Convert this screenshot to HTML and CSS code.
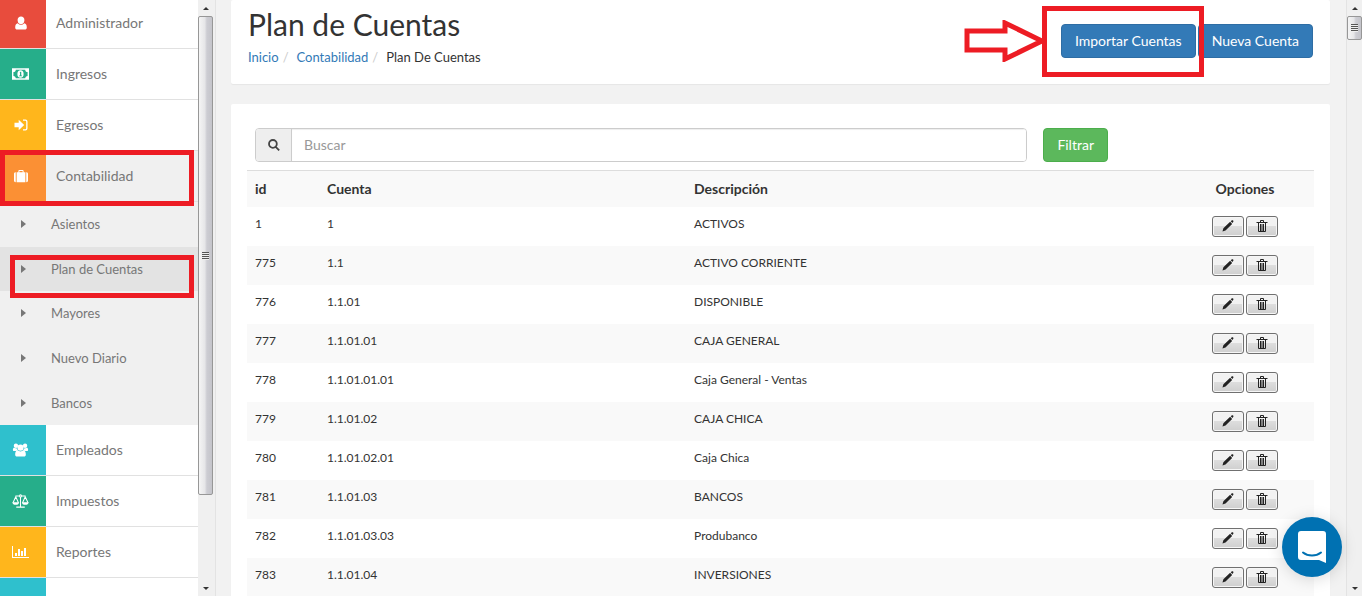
FILE: index.html
```html
<!DOCTYPE html>
<html lang="es">
<head>
    <meta charset="UTF-8">
    <meta name="viewport" content="width=device-width, initial-scale=1.0">
    <title>Plan de Cuentas</title>
    <link rel="stylesheet" href="styles.css">
</head>
<body>

    <!-- Iconos -->
    <svg class="iconos" aria-hidden="true">
        <symbol id="i-usuario" viewBox="0 0 14 14">
            <path d="M7 .5c2 0 3.400 1.500 3.400 3.500 0 1.600-.7 3-1.700 3.700L7 8.200l-1.700-.5C4.300 7 3.600 5.600 3.600 4 3.600 2 5 .5 7 .5z"/>
            <path d="M3.900 7.200c1.700 2 4.500 2 6.200 0 1.900.3 2.700 1.900 2.700 4.200 0 1.300-.8 2.100-2 2.100H3.200c-1.200 0-2-.8-2-2.100 0-2.300.8-3.900 2.700-4.200z"/>
        </symbol>
        <symbol id="i-dinero" viewBox="0 0 18 12">
            <path fill-rule="evenodd" d="M0 0h18v12H0zM4 1.500c0 1.400-1 2.500-2.500 2.500v4c1.500 0 2.500 1.100 2.500 2.500h10c0-1.400 1-2.500 2.500-2.500V4C15 4 14 2.900 14 1.500z"/>
            <ellipse cx="9" cy="6" rx="3.300" ry="4"/>
            <path class="hueco" d="M8 4.300 9 3.500h.8v4h.8v1H7.500v-1h1V4.800z"/>
        </symbol>
        <symbol id="i-entrar" viewBox="0 0 14 14">
            <path d="M.5 4.800h4.200V1.800l5.500 5.200-5.500 5.200v-3H.5z"/>
            <path d="M9 1.500h2.500a2 2 0 0 1 2 2v7a2 2 0 0 1-2 2H9v-1.300h2.300c.6 0 .9-.3.900-.9V3.700c0-.6-.3-.9-.9-.9H9z"/>
        </symbol>
        <symbol id="i-maletin" viewBox="0 0 16 14">
            <path d="M0 4.500C0 3.300.7 2.700 2 2.700V14C.7 14 0 13.300 0 12.200zM16 4.500c0-1.200-.7-1.800-2-1.800V14c1.300 0 2-.7 2-1.800z"/>
            <path fill-rule="evenodd" d="M3 2.700h2V1.200C5 .5 5.500 0 6.200 0h3.600C10.500 0 11 .5 11 1.200v1.500h2V14H3zM6.200 1.300v1.400h3.600V1.300z"/>
        </symbol>
        <symbol id="i-grupo" viewBox="0 0 18 16">
            <circle cx="3.800" cy="3.200" r="2.500"/>
            <circle cx="14.200" cy="3.200" r="2.500"/>
            <circle cx="9" cy="5.300" r="3.500"/>
            <path d="M1.200 5.300 4.800 6.200 6 8.500 4 9.200H1.500C.5 9.200.2 8.500.3 7.500c.1-1 .4-1.800.9-2.200zM16.800 5.300l-3.600.9L12 8.500l2 .7h2.500c1 0 1.300-.7 1.200-1.700-.1-1-.4-1.800-.9-2.200z"/>
            <path d="M5.700 8.300c1.900 1.700 4.700 1.700 6.600 0 1.800.2 2.800 2.200 2.800 4.700 0 1.500-.8 2.400-2.100 2.400H5c-1.300 0-2.100-.9-2.100-2.400 0-2.500 1-4.500 2.800-4.700z"/>
        </symbol>
        <symbol id="i-balanza" viewBox="0 0 20 16">
            <g fill="none" stroke="currentColor" stroke-width="1.200">
                <path d="M4 2h4.500M11.500 2H16M10 3v12M5 15.200h10M1.200 10 4.400 3l3.200 7M12.400 10l3.200-7 3.200 7"/>
                <circle cx="10" cy="2" r="1.200"/>
            </g>
            <path d="M.4 9.500h8c0 1.900-1.700 3-4 3s-4-1.100-4-3zM11.600 9.500h8c0 1.900-1.700 3-4 3s-4-1.100-4-3z"/>
        </symbol>
        <symbol id="i-barras" viewBox="0 0 17 14">
            <path d="M0 1h1v11h16v1H0zM3 8h2v3H3zM6 4h2v7H6zM9 6h2v5H9zM12 3h2v8h-2z"/>
        </symbol>
        <symbol id="i-flecha" viewBox="0 0 5 8">
            <path d="M0 0l5 4-5 4z"/>
        </symbol>
        <symbol id="i-lupa" viewBox="0 0 12 12">
            <path fill="none" stroke="currentColor" stroke-width="1.800" d="M8.800 4.900a3.900 3.900 0 1 1-7.800 0 3.900 3.900 0 0 1 7.800 0zM7.700 7.800l3.500 3.500"/>
        </symbol>
        <symbol id="i-lapiz" viewBox="0 0 13 13">
            <path d="M.5 12.500 1.500 9 8.800 2l2.200 2.200-7.200 7.300zM9.500 1.300l.9-.8c.6-.5 1.200-.3 1.600.1.500.5.6 1.100.1 1.600l-.9 1z"/>
        </symbol>
        <symbol id="i-basura" viewBox="0 0 12 14">
            <path fill="none" stroke="currentColor" d="M.5 3.500h11M4.500 3V1.500h3V3M2.500 4v8.500h7V4M4.500 5v7M6 5v7M7.500 5v7"/>
        </symbol>
    </svg>

    <div class="app">

        <!-- Menú lateral -->
        <nav class="lateral">
            <ul class="menu">
                <li><a href="#"><span class="icono rojo"><svg><use href="#i-usuario"/></svg></span>Administrador</a></li>
                <li><a href="#"><span class="icono verde"><svg class="ancho"><use href="#i-dinero"/></svg></span>Ingresos</a></li>
                <li><a href="#"><span class="icono amarillo"><svg><use href="#i-entrar"/></svg></span>Egresos</a></li>
                <li class="activo">
                    <a href="#"><span class="icono naranja"><svg><use href="#i-maletin"/></svg></span>Contabilidad</a>
                    <span class="marca marca-menu"></span>
                </li>
                <li class="grupo">
                    <ul class="submenu">
                        <li><a href="#"><svg><use href="#i-flecha"/></svg>Asientos</a></li>
                        <li class="actual"><a href="#"><svg><use href="#i-flecha"/></svg>Plan de Cuentas</a><span class="marca marca-submenu"></span></li>
                        <li><a href="#"><svg><use href="#i-flecha"/></svg>Mayores</a></li>
                        <li><a href="#"><svg><use href="#i-flecha"/></svg>Nuevo Diario</a></li>
                        <li><a href="#"><svg><use href="#i-flecha"/></svg>Bancos</a></li>
                    </ul>
                </li>
                <li><a href="#"><span class="icono celeste"><svg class="ancho"><use href="#i-grupo"/></svg></span>Empleados</a></li>
                <li><a href="#"><span class="icono verde"><svg class="ancho"><use href="#i-balanza"/></svg></span>Impuestos</a></li>
                <li><a href="#"><span class="icono amarillo"><svg class="ancho"><use href="#i-barras"/></svg></span>Reportes</a></li>
                <li><a href="#" aria-label="Más"><span class="icono celeste"></span></a></li>
            </ul>
        </nav>
        <div class="scroll scroll-menu" aria-hidden="true">
            <span class="arriba"></span>
            <div class="carril"><div class="pulgar"><i></i></div></div>
            <span class="abajo"></span>
        </div>

        <!-- Contenido -->
        <main class="contenido">
            <header class="panel cabecera">
                <div>
                    <h1>Plan de Cuentas</h1>
                    <ol class="migas">
                        <li><a href="#">Inicio</a></li>
                        <li><a href="#">Contabilidad</a></li>
                        <li>Plan De Cuentas</li>
                    </ol>
                </div>
                <div class="acciones">
                    <div class="importar">
                        <button class="btn azul" type="button">Importar Cuentas</button>
                        <span class="marca marca-boton"></span>
                        <svg class="flecha-roja" viewBox="0 0 82 42" aria-hidden="true">
                            <path d="M3 11h38V3l37 18-37 18V30H3z"/>
                        </svg>
                    </div>
                    <button class="btn azul" type="button">Nueva Cuenta</button>
                </div>
            </header>

            <section class="panel listado">
                <form class="filtro">
                    <div class="buscador">
                        <label for="buscar" aria-label="Buscar"><svg><use href="#i-lupa"/></svg></label>
                        <input type="text" id="buscar" placeholder="Buscar">
                    </div>
                    <button class="btn verde-claro" type="button">Filtrar</button>
                </form>
                <table>
                    <thead>
                        <tr>
                            <th class="col-id">id</th>
                            <th class="col-cuenta">Cuenta</th>
                            <th>Descripción</th>
                            <th class="opciones">Opciones</th>
                        </tr>
                    </thead>
                    <tbody id="cuentas"></tbody>
                </table>
            </section>
        </main>
        <div class="scroll scroll-pagina" aria-hidden="true">
            <span class="arriba"></span>
            <div class="carril"><div class="pulgar"><i></i></div></div>
            <span class="abajo"></span>
        </div>
    </div>

    <button class="chat" type="button" aria-label="Abrir chat">
        <svg viewBox="0 0 28 32">
            <path class="globo" d="M3 0h22a3 3 0 0 1 3 3v29l-7-3H3a3 3 0 0 1-3-3V3a3 3 0 0 1 3-3z"/>
            <path class="sonrisa" d="M5 21.500c5 4 13 4 18 0"/>
        </svg>
    </button>

    <script>
        const cuentas = [
            [1, "1", "ACTIVOS"],
            [775, "1.1", "ACTIVO CORRIENTE"],
            [776, "1.1.01", "DISPONIBLE"],
            [777, "1.1.01.01", "CAJA GENERAL"],
            [778, "1.1.01.01.01", "Caja General - Ventas"],
            [779, "1.1.01.02", "CAJA CHICA"],
            [780, "1.1.01.02.01", "Caja Chica"],
            [781, "1.1.01.03", "BANCOS"],
            [782, "1.1.01.03.03", "Produbanco"],
            [783, "1.1.01.04", "INVERSIONES"]
        ];

        document.getElementById("cuentas").innerHTML = cuentas.map(([id, cuenta, descripcion]) => `
            <tr>
                <td>${id}</td>
                <td>${cuenta}</td>
                <td>${descripcion}</td>
                <td class="opciones">
                    <div class="botones">
                        <button type="button" aria-label="Editar ${cuenta}"><svg><use href="#i-lapiz"/></svg></button>
                        <button type="button" aria-label="Eliminar ${cuenta}"><svg><use href="#i-basura"/></svg></button>
                    </div>
                </td>
            </tr>`).join("");
    </script>
</body>
</html>
```
FILE: styles.css
```css
* {
    box-sizing: border-box;
}

body {
    margin: 0;
    font-family: Lato, sans-serif;
    font-size: 14px;
    line-height: 20px;
    color: #333;
    background-color: #fff;
    overflow: hidden;
}

ul, ol {
    list-style: none;
    margin: 0;
    padding: 0;
}

a {
    color: #337ab7;
    text-decoration: none;
}

button, input {
    font-family: inherit;
}

svg {
    fill: currentColor;
}

.iconos {
    display: none;
}

.app {
    display: flex;
    height: 100vh;
    padding-right: 4px;
    overflow: hidden;
}

/* Menú lateral */
.lateral {
    width: 198px;
    flex-shrink: 0;
    background-color: #fff;
}

.menu {
    margin-top: -2px;
}

.menu > li {
    position: relative;
    border-bottom: 1px solid #e1e1e1;
}

.menu > .grupo {
    border-bottom: none;
}

.menu > li > a {
    display: flex;
    align-items: center;
    gap: 10px;
    height: 50px;
    color: #777;
}

.menu > .activo > a {
    background-color: #f0f0f0;
}

.icono {
    display: flex;
    align-items: center;
    justify-content: center;
    width: 46px;
    height: 100%;
    padding-right: 5px;
    color: #fff;
}

.icono svg {
    width: 14px;
    height: 14px;
}

.icono svg.ancho {
    width: 17px;
}

.rojo { background-color: #e84c3d; }
.verde { background-color: #26ae8a; }
.amarillo { background-color: #ffb61c; }
.naranja { background-color: #fb9034; }
.celeste { background-color: #2fc0cd; }

.hueco {
    fill: #26ae8a;
}

.submenu {
    display: grid;
    grid-auto-rows: 1fr;
    height: 223px;
    background-color: #f0f0f0;
}

.submenu li {
    position: relative;
}

.submenu .actual {
    background-color: #e3e3e3;
}

.submenu a {
    display: flex;
    align-items: center;
    gap: 25px;
    height: 100%;
    padding-left: 21px;
    font-size: 13px;
    color: #777;
}

.submenu svg {
    width: 5px;
    height: 8px;
}

/* Barras de desplazamiento */
.scroll {
    display: flex;
    flex-direction: column;
    flex-shrink: 0;
    width: 16px;
    background-color: #f0f0f0;
}

.scroll-menu {
    width: 18px;
    padding-right: 2px;
    border-right: 1px solid #e3e3e3;
}

.scroll-pagina {
    border-left: 1px solid #e3e3e3;
}

.scroll .arriba, .scroll .abajo {
    display: flex;
    align-items: center;
    justify-content: center;
    height: 16px;
}

.scroll .arriba::before, .scroll .abajo::before {
    content: "";
    border: 3px solid transparent;
    border-top-width: 0;
    border-bottom-color: #333;
}

.scroll .abajo::before {
    border-width: 3px 3px 0;
    border-top-color: #333;
}

.carril {
    flex: 1;
}

.pulgar {
    display: flex;
    align-items: center;
    justify-content: center;
    height: 24px;
    border: 1px solid #979797;
    border-radius: 2px;
    background-image: linear-gradient(to right, #f5f5f5, #e6e6e8 45%, #cdcdd3 60%, #c4c4ca);
}

.scroll-menu .pulgar {
    height: 85%;
}

.pulgar i {
    width: 7px;
    height: 8px;
    background-image: repeating-linear-gradient(#555 0 1px, #eee 1px 2px);
}

/* Contenido */
.contenido {
    flex: 1;
    min-width: 0;
    padding: 0 16px 0 15px;
    background-color: #f2f2f2;
}

.panel {
    background-color: #fff;
    border-radius: 2px;
    box-shadow: 0 1px 1px rgba(0, 0, 0, 0.05);
}

.cabecera {
    display: flex;
    justify-content: space-between;
    align-items: flex-start;
    height: 84px;
    margin-bottom: 20px;
    padding: 8px 17px;
}

h1 {
    margin: 0 0 6px;
    font-size: 30px;
    font-weight: 400;
    line-height: 33px;
}

.migas {
    display: flex;
    font-size: 13px;
}

.migas li + li::before {
    content: "/";
    padding: 0 8px 0 4px;
    color: #ccc;
}

.acciones {
    display: flex;
    gap: 2px;
    padding-top: 16px;
}

.btn {
    display: block;
    height: 34px;
    padding: 0 13px 2px;
    font-size: 14px;
    color: #fff;
    border: 1px solid;
    border-radius: 4px;
    white-space: nowrap;
    cursor: pointer;
}

.azul {
    background-color: #337ab7;
    border-color: #2e6da4;
}

.verde-claro {
    background-color: #5cb85c;
    border-color: #4cae4c;
}

.listado {
    padding: 24px 16px;
}

.filtro {
    display: flex;
    gap: 16px;
    padding: 0 206px 8px 8px;
}

.buscador {
    display: flex;
    flex: 1;
    height: 34px;
    border: 1px solid #ccc;
    border-radius: 4px;
    overflow: hidden;
}

.buscador label {
    display: flex;
    align-items: center;
    justify-content: center;
    width: 36px;
    background-color: #eee;
    border-right: 1px solid #ccc;
    color: #444;
}

.buscador svg {
    width: 12px;
    height: 12px;
}

.buscador input {
    flex: 1;
    min-width: 0;
    padding: 0 12px 2px;
    font-size: 14px;
    border: none;
    outline: none;
    box-shadow: inset 0 1px 1px rgba(0, 0, 0, 0.07);
}

.buscador input::placeholder {
    color: #999;
}

table {
    width: 100%;
    table-layout: fixed;
    border-collapse: collapse;
    border-top: 1px solid #ddd;
}

th, td {
    padding: 8px;
    text-align: left;
    vertical-align: top;
}

th {
    font-weight: 700;
    background-color: #f9f9f9;
}

td {
    height: 39px;
    font-size: 12px;
    line-height: 18px;
}

tbody tr:nth-child(even) {
    background-color: #f9f9f9;
}

.col-id {
    width: 72px;
}

.col-cuenta {
    width: 34.4%;
}

.opciones {
    width: 110px;
    padding-right: 36px;
    text-align: center;
}

.botones {
    display: flex;
    gap: 2px;
    padding-top: 1px;
}

.botones button {
    display: flex;
    align-items: center;
    justify-content: center;
    width: 32px;
    height: 21px;
    padding: 0 0 1px;
    color: #222;
    border: 1px solid #707070;
    border-radius: 3px;
    background-image: linear-gradient(#f2f2f2 0 45%, #dddddd 50%, #cfcfcf);
    box-shadow: inset 0 0 0 1px #f6f6f6;
}

.botones svg {
    width: 12px;
    height: 14px;
}

/* Marcas rojas de la guía */
.marca {
    position: absolute;
    z-index: 2;
    border: 5px solid #ed1c24;
    pointer-events: none;
}

.marca-menu {
    top: -1px;
    left: 0;
    right: 4px;
    bottom: -5px;
}

.marca-submenu {
    top: 8px;
    left: 10px;
    right: 4px;
    bottom: -7px;
}

.importar {
    position: relative;
}

.marca-boton {
    top: -18px;
    left: -19px;
    right: -8px;
    bottom: -19px;
}

.flecha-roja {
    position: absolute;
    top: -4px;
    right: 100%;
    width: 82px;
    height: 42px;
    margin-right: 15px;
    fill: none;
    stroke: #ed1c24;
    stroke-width: 5;
}

.chat {
    position: fixed;
    right: 24px;
    bottom: 19px;
    z-index: 3;
    display: flex;
    align-items: center;
    justify-content: center;
    width: 60px;
    height: 60px;
    padding: 0;
    border: none;
    border-radius: 50%;
    background-color: #0071b2;
    box-shadow: 0 2px 16px rgba(0, 0, 0, 0.15);
    cursor: pointer;
}

.chat svg {
    width: 28px;
    height: 32px;
}

.globo {
    fill: #fff;
}

.sonrisa {
    fill: none;
    stroke: #0071b2;
    stroke-width: 2;
    stroke-linecap: round;
}
```
